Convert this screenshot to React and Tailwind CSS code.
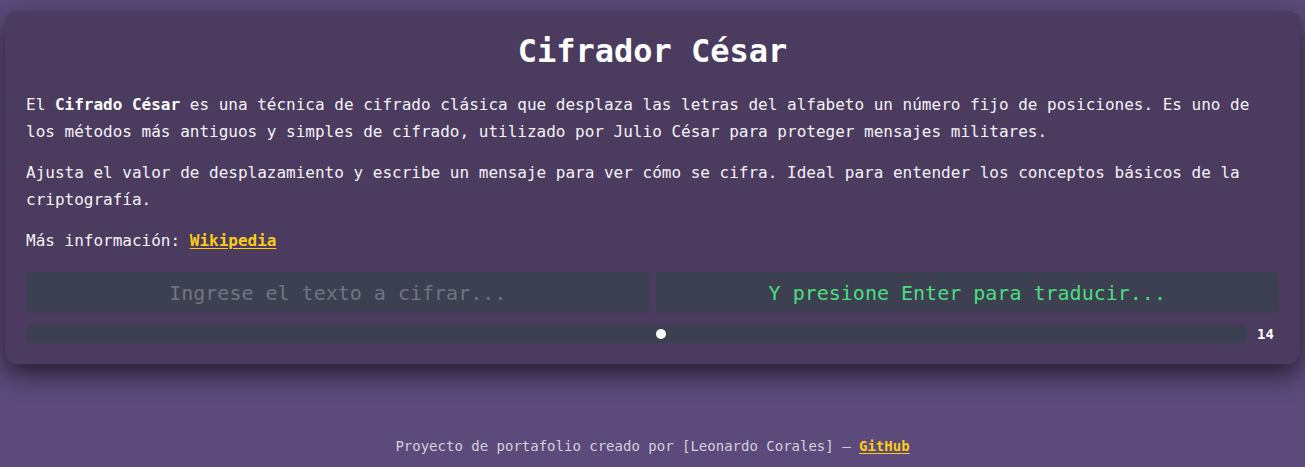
import { useState } from "react";

const MONO = { fontFamily: '"DejaVu Sans Mono", "Liberation Mono", monospace' };

function ShiftSlider({ value, min, max }) {
  const pct = ((value - min) / (max - min)) * 100;
  return (
    <div className="mt-[11px] flex items-center gap-[10px]">
      <div className="relative h-[18px] flex-1 rounded-[5px] bg-[#3d4051]">
        <div className="absolute inset-y-0 left-[5px] right-[5px]">
          <span
            className="absolute top-1/2 h-[10px] w-[10px] -translate-x-1/2 -translate-y-1/2 rounded-full bg-white"
            style={{ left: `${pct}%` }}
          />
        </div>
      </div>
      <span className="w-[22px] text-[14px] font-bold leading-5 text-white">{value}</span>
    </div>
  );
}

export default function App() {
  const [text, setText] = useState("");
  const shift = 14;

  return (
    <div
      className="flex min-h-screen flex-col bg-[#5b4a7a] text-[#f4f2f7]"
      style={MONO}
    >
      <main className="mx-[5px] mt-[11px] rounded-[12px] bg-[#4a3b5f] px-[21px] pb-[20px] pt-[20px] shadow-[0_10px_24px_rgba(0,0,0,0.6)]">
        <h1 className="mb-[20px] text-center text-[32px] font-bold leading-[40px] text-white">
          Cifrador César
        </h1>

        <p className="text-[16px] leading-[27px]">
          El <strong className="font-bold text-white">Cifrado César</strong> es una técnica de cifrado clásica que
          desplaza las letras del alfabeto un número fijo de posiciones. Es uno de los métodos más antiguos y simples
          de cifrado, utilizado por Julio César para proteger mensajes militares.
        </p>
        <p className="mt-[14px] text-[16px] leading-[27px]">
          Ajusta el valor de desplazamiento y escribe un mensaje para ver cómo se cifra. Ideal para entender los
          conceptos básicos de la criptografía.
        </p>
        <p className="mt-[14px] text-[16px] leading-[27px]">
          Más información:{" "}
          <a href="#" className="font-bold text-[#facc15] underline underline-offset-2">
            Wikipedia
          </a>
        </p>

        <div className="mt-[18px] grid grid-cols-2 gap-[6px]">
          <input
            value={text}
            onChange={(e) => setText(e.target.value)}
            placeholder="Ingrese el texto a cifrar..."
            className="h-[41px] w-full rounded-[5px] bg-[#3d4051] px-3 text-center text-[20px] text-[#e5e5e5] outline-none placeholder:text-[#737380]"
            style={MONO}
          />
          <div className="flex h-[41px] items-center justify-center rounded-[5px] bg-[#3d4051] text-[20px] text-[#4ade80]">
            Y presione Enter para traducir...
          </div>
        </div>

        <ShiftSlider value={shift} min={1} max={26} />
      </main>

      <footer className="mt-auto pb-[11px] text-center text-[14px] leading-5 text-[#d4d0dc]">
        Proyecto de portafolio creado por [Leonardo Corales] –{" "}
        <a href="#" className="font-bold text-[#facc15] underline underline-offset-2">
          GitHub
        </a>
      </footer>
    </div>
  );
}
